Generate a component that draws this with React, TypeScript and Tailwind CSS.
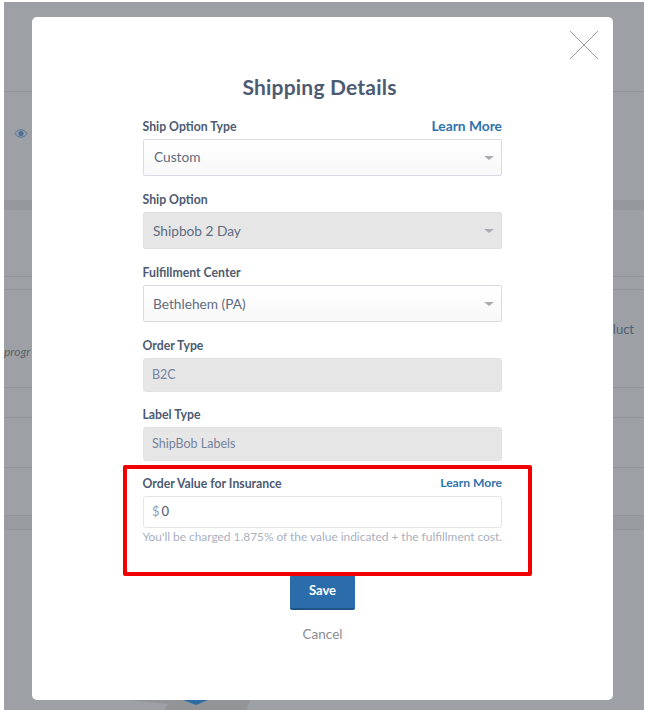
const font = "font-['Lato','Open_Sans',sans-serif]";

function Caret() {
  return <span className="h-0 w-0 border-x-[5px] border-t-[4px] border-x-transparent border-t-[#a9abb0]" />;
}

function Label({ text, link, tall }: { text: string; link?: string; tall?: boolean }) {
  return (
    <div className="flex h-[16px] items-center justify-between text-[12.25px] font-bold leading-[16px] text-[#4d5b72]">
      <span className="-ml-[0.5px] mt-[2px]">{text}</span>
      {link && <span className={tall ? "text-[13.8px] text-[#2f72ac]" : "text-[12.1px] text-[#2f72ac]"}>{link}</span>}
    </div>
  );
}

function Select({ value, disabled, pad = "pl-[9px]", lift = "mt-[2px]" }: { value: string; disabled?: boolean; pad?: string; lift?: string }) {
  return (
    <div
      className={`mt-[5px] flex h-[37px] items-center justify-between rounded-[2px] border ${pad} pr-[7px] text-[13.7px] text-[#5f6b7e] ${
        disabled ? "border-[#e0e0e2] bg-[#e6e6e7]" : "border-[#d8dbe6] bg-gradient-to-b from-white to-[#f8f8f9]"
      }`}
    >
      <span className={lift}>{value}</span>
      <Caret />
    </div>
  );
}

function ReadOnly({ value }: { value: string }) {
  return (
    <div className="mt-[5px] flex h-[34px] items-center rounded-[3px] border border-[#e2e2e4] bg-[#e6e6e7] pl-[8px] text-[12.5px] text-[#75839a]">
      {value}
    </div>
  );
}

function BgLine({ h }: { h: string }) {
  return <div className={`${h} border-b border-[#8f9397]`} />;
}

export default function App() {
  return (
    <div className={`${font} relative h-[710px] w-[650px] overflow-hidden bg-white`}>
      <div className="ml-[4px] mt-[2px] flex h-[708px] w-[640px] flex-col bg-[#9da0a4]">
        <BgLine h="h-[90px]" />
        <div className="flex h-[108px] items-center pl-[10px] text-[#4a6f96]">
          <svg width="14" height="11" viewBox="0 0 15 12" fill="none" className="mt-[-26px]">
            <path d="M1 6c2-3 4-4 6.500-4S12 3 14 6c-2 3-4 4-6.500 4S3 9 1 6Z" stroke="currentColor" strokeWidth="1" />
            <circle cx="7.500" cy="6" r="2.800" fill="currentColor" />
          </svg>
        </div>
        <div className="h-[10px] bg-[#95989c]" />
        <BgLine h="h-[67px]" />
        <BgLine h="h-[13px]" />
        <div className="flex h-[98px] items-end justify-between border-b border-[#8f9397] text-[12px] italic leading-[14px] text-[#5d6165]">
          <span className="mb-[28px]">progr</span>
          <span className="mb-[51px] pr-[10px] text-[13px] not-italic text-[#4d6076]">luct</span>
        </div>
        <BgLine h="h-[30px]" />
        <BgLine h="h-[50px]" />
        <div className="h-[47px]" />
        <div className="h-[15px] border-y border-[#92959a] bg-[#989b9f]" />
      </div>

      <svg width="130" height="10" viewBox="0 0 130 10" className="absolute left-[128px] top-[700px]">
        <path d="M0 0H122L118 10H36L40 4Z" fill="#929498" />
        <path d="M55 0H80L68 5Z" fill="#2e6da4" />
      </svg>

      <div className="absolute left-[32px] top-[17px] flex h-[683px] w-[581px] flex-col items-center rounded-[5px] bg-white">
        <svg width="30" height="30" viewBox="0 0 30 30" className="absolute right-[14px] top-[13px]">
          <path d="M1 1 29 29M29 1 1 29" stroke="#9a9a9a" strokeWidth="1" />
        </svg>
        <h1 className="mt-[58px] pr-[6px] text-[21px] font-bold leading-[24px] tracking-[0.2px] text-[#4d5b72]">
          Shipping Details
        </h1>
        <div className="mt-[19px] w-[359px]">
          <Label text="Ship Option Type" link="Learn More" tall />
          <Select value="Custom" pad="pl-[10px]" lift="mt-0" />
          <div className="mt-[15px]">
            <Label text="Ship Option" />
            <Select value="Shipbob 2 Day" disabled />
          </div>
          <div className="mt-[15px]">
            <Label text="Fulfillment Center" />
            <Select value="Bethlehem (PA)" />
          </div>
          <div className="mt-[15px]">
            <Label text="Order Type" />
            <ReadOnly value="B2C" />
          </div>
          <div className="mt-[14px]">
            <Label text="Label Type" />
            <ReadOnly value="ShipBob Labels" />
          </div>
          <div className="mt-[14px]">
            <Label text="Order Value for Insurance" link="Learn More" />
            <div className="mt-[5px] flex h-[32px] items-center gap-[2px] rounded-[3px] border border-[#e4e5e8] bg-white pl-[8px] text-[13px] text-[#4d5b72]">
              <span className="text-[#9aa3b2]">$</span>
              <span>0</span>
            </div>
            <p className="-ml-[0.5px] mt-[2px] whitespace-nowrap text-[11.9px] leading-[14px] text-[#a9b1c0]">
              You'll be charged 1.875% of the value indicated + the fulfillment cost.
            </p>
          </div>
        </div>
        <button className="mt-[31px] h-[35px] w-[65px] rounded-[2px] border-b-2 border-[#1f5586] bg-[#2b6cab] pb-[2px] text-[13px] font-bold text-white">
          Save
        </button>
        <span className="mt-[16px] text-[13.5px] leading-[16px] text-[#8a8d92]">Cancel</span>
      </div>

      <div className="pointer-events-none absolute left-[123px] top-[465px] h-[111px] w-[409px] rounded-[2px] border-[4px] border-[#f00000]" />
    </div>
  );
}
